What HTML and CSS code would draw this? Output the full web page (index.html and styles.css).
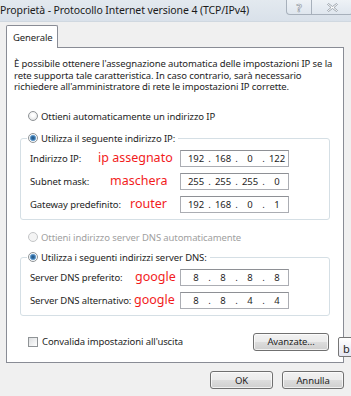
FILE: index.html
```html
<!DOCTYPE html>
<html lang="it">
<head>
  <meta charset="UTF-8">
  <title>Proprietà - Protocollo Internet versione 4 (TCP/IPv4)</title>
  <link rel="stylesheet" href="styles.css">
</head>
<body>

  <!-- Title bar -->
  <div class="titlebar">
    <span class="title">Proprietà - Protocollo Internet versione 4 (TCP/IPv4)</span>
    <div class="caption-buttons">
      <span class="cap-btn help">?</span>
      <span class="cap-btn close">
        <svg width="11" height="9" viewBox="0 0 11 9">
          <path d="M1.5 0.5 L5.5 3.5 L9.5 0.5 L10.5 1.5 L7 4.5 L10.5 7.5 L9.5 8.5 L5.5 5.5 L1.5 8.5 L0.5 7.5 L4 4.5 L0.5 1.5 Z" fill="#fbfbfb" stroke="#8c949e" stroke-width="0.8"/>
        </svg>
      </span>
    </div>
  </div>

  <div class="dialog">
    <div class="tabs">
      <div class="tab">Generale</div>
    </div>

    <div class="panel">
      <p class="intro">È possibile ottenere l'assegnazione automatica delle impostazioni IP se la rete supporta tale caratteristica. In caso contrario, sarà necessario richiedere all'amministratore di rete le impostazioni IP corrette.</p>

      <div class="option"><span class="radio"></span>Ottieni automaticamente un indirizzo IP</div>

      <fieldset class="group first">
        <legend><span class="radio checked"></span>Utilizza il seguente indirizzo IP:</legend>
        <div class="rows">
          <div class="row">
            <span class="label">Indirizzo IP:</span>
            <span class="note note-ip">ip assegnato</span>
            <div class="ipbox"><span>192</span><i>.</i><span>168</span><i>.</i><span>0</span><i>.</i><span>122</span></div>
          </div>
          <div class="row">
            <span class="label">Subnet mask:</span>
            <span class="note note-mask">maschera</span>
            <div class="ipbox"><span>255</span><i>.</i><span>255</span><i>.</i><span>255</span><i>.</i><span>0</span></div>
          </div>
          <div class="row">
            <span class="label">Gateway predefinito:</span>
            <span class="note note-gw">router</span>
            <div class="ipbox"><span>192</span><i>.</i><span>168</span><i>.</i><span>0</span><i>.</i><span>1</span></div>
          </div>
        </div>
      </fieldset>

      <div class="option disabled"><span class="radio"></span>Ottieni indirizzo server DNS automaticamente</div>

      <fieldset class="group">
        <legend><span class="radio checked"></span>Utilizza i seguenti indirizzi server DNS:</legend>
        <div class="rows">
          <div class="row">
            <span class="label">Server DNS preferito:</span>
            <span class="note note-dns1">google</span>
            <div class="ipbox"><span>8</span><i>.</i><span>8</span><i>.</i><span>8</span><i>.</i><span>8</span></div>
          </div>
          <div class="row">
            <span class="label">Server DNS alternativo:</span>
            <span class="note note-dns2">google</span>
            <div class="ipbox"><span>8</span><i>.</i><span>8</span><i>.</i><span>4</span><i>.</i><span>4</span></div>
          </div>
        </div>
      </fieldset>

      <div class="footer-row">
        <div class="check-line"><span class="checkbox"></span>Convalida impostazioni all'uscita</div>
        <button class="btn advanced">Avanzate...</button>
      </div>
    </div>

    <div class="actions">
      <button class="btn ok">OK</button>
      <button class="btn cancel">Annulla</button>
    </div>

    <!-- tooltip peeking in from the right edge -->
    <div class="tooltip">b</div>
  </div>

</body>
</html>
```

FILE: styles.css
```css
/* Page */
body {
  margin: 0;
  width: 351px;
  height: 396px;
  overflow: hidden;
  background-color: #f0f0f0;
  font-family: 'Noto Sans', 'Open Sans', sans-serif;
  font-size: 9.5px;
  letter-spacing: -0.1px;
  color: #1e1e1e;
}

/* Title bar */
.titlebar {
  height: 22px;
  display: flex;
  justify-content: space-between;
  align-items: flex-start;
  background: linear-gradient(#e3e9ef, #d9e1ea);
  border-bottom: 1px solid #d0d8e0;
  box-sizing: border-box;
}

.titlebar .title {
  font-size: 10.5px;
  letter-spacing: -0.1px;
  line-height: 20px;
  color: #1b1b1b;
  white-space: nowrap;
}

.caption-buttons {
  display: flex;
  margin-right: -2px;
}

.cap-btn {
  height: 14px;
  border: 1px solid #a7b0bb;
  border-top: none;
  background: linear-gradient(#eef2f6, #dfe6ee);
  display: flex;
  align-items: center;
  justify-content: center;
}

.cap-btn.help {
  width: 24px;
  border-radius: 0 0 0 4px;
  font-size: 11px;
  font-weight: bold;
  color: #fafafa;
  -webkit-text-stroke: 0.6px #8c949e;
}

.cap-btn.close {
  width: 40px;
  border-left: none;
  border-radius: 0 0 4px 0;
}

/* Dialog body */
.dialog {
  position: relative;
  padding: 3px 7px 0 6px;
}

.tabs {
  display: flex;
  height: 23px;
  margin-bottom: -1px;
}

.tab {
  position: relative;
  z-index: 1;
  width: 52px;
  background-color: #fff;
  border: 1px solid #898c95;
  border-bottom: none;
  border-radius: 2px 2px 0 0;
  padding: 5px 0 0 6px;
  box-sizing: border-box;
  color: #1e1e1e;
}

.panel {
  background-color: #fff;
  border: 1px solid #898c95;
  padding: 10px 10px 12px 7px;
  height: 316px;
  box-sizing: border-box;
}

.intro {
  margin: 0;
  line-height: 11.5px;
}

/* Radio options */
.option {
  display: flex;
  align-items: center;
  height: 13px;
  margin: 17px 0 0 14px;
}

.option.disabled {
  color: #a0a0a0;
  margin-top: 11px;
}

.radio {
  width: 8px;
  height: 8px;
  border-radius: 50%;
  border: 1px solid #8f9396;
  background: radial-gradient(circle at 50% 40%, #ffffff 20%, #d9dbdd 100%);
  margin-right: 3px;
  flex-shrink: 0;
}

.radio.checked {
  background: radial-gradient(circle, #1d4f7c 0, #3b78b0 2px, #8fbbe0 3px, #ffffff 3.6px, #e2e4e6 100%);
}

.option.disabled .radio {
  border-color: #c4c6c8;
  background: #f4f4f4;
}

/* Group boxes */
.group {
  margin: 7px 3px 0 6px;
  padding: 0 9px 6px 9px;
  border: 1px solid #d5dfe5;
  border-radius: 3px;
}

.group.first {
  margin-top: 9px;
}

.group legend {
  display: flex;
  align-items: center;
  height: 13px;
  margin-left: -3px;
  padding: 0 3px 0 1px;
}

.rows {
  display: grid;
  row-gap: 6px;
  padding-top: 5px;
}

.row {
  position: relative;
  display: flex;
  align-items: center;
  justify-content: space-between;
  height: 17px;
}

/* Red annotations painted over the dialog */
.note {
  position: absolute;
  top: -2px;
  color: #f21c1c;
  font-size: 12.5px;
  letter-spacing: 0;
  line-height: 20px;
  white-space: nowrap;
}

.note-ip { left: 68px; }
.note-mask { left: 80px; }
.note-gw { left: 100px; }
.note-dns1 { left: 105px; }
.note-dns2 { left: 104px; }

/* IP address box */
.ipbox {
  width: 109px;
  height: 17px;
  box-sizing: border-box;
  border: 1px solid #abadb3;
  border-top-color: #8e9095;
  background-color: #fff;
  display: flex;
  align-items: center;
  padding-left: 5px;
  margin-right: 31px;
}

.ipbox span {
  width: 20px;
  text-align: center;
}

.ipbox i {
  font-style: normal;
  width: 7px;
  text-align: center;
}

/* Footer inside panel */
.footer-row {
  display: flex;
  align-items: center;
  justify-content: space-between;
  margin: 17px 4px 0 14px;
}

.check-line {
  display: flex;
  align-items: center;
}

.checkbox {
  width: 8px;
  height: 8px;
  border: 1px solid #8f9396;
  background: linear-gradient(135deg, #dcdee0, #ffffff);
  margin-right: 4px;
}

/* Buttons */
.btn {
  font-family: 'Noto Sans', 'Open Sans', sans-serif;
  font-size: 9.5px;
  letter-spacing: -0.1px;
  color: #1e1e1e;
  height: 18px;
  padding: 0;
  border: 1px solid #707070;
  border-radius: 3px;
  background: linear-gradient(#f2f2f2 0, #ebebeb 50%, #dddddd 51%, #cfcfcf 100%);
  box-shadow: inset 0 0 0 1px rgba(255, 255, 255, 0.7);
}

.btn.advanced {
  width: 76px;
}

.actions {
  display: flex;
  justify-content: flex-end;
  gap: 9px;
  margin-top: 8px;
}

.btn.ok {
  width: 63px;
}

.btn.cancel {
  width: 62px;
}

/* Partially visible tooltip on the right edge */
.tooltip {
  position: absolute;
  left: 338px;
  top: 315px;
  width: 30px;
  height: 20px;
  box-sizing: border-box;
  border: 1px solid #767676;
  border-radius: 2px;
  background: linear-gradient(#ffffff, #e4e5f0);
  padding: 3px 0 0 4px;
  font-size: 11px;
}
```
